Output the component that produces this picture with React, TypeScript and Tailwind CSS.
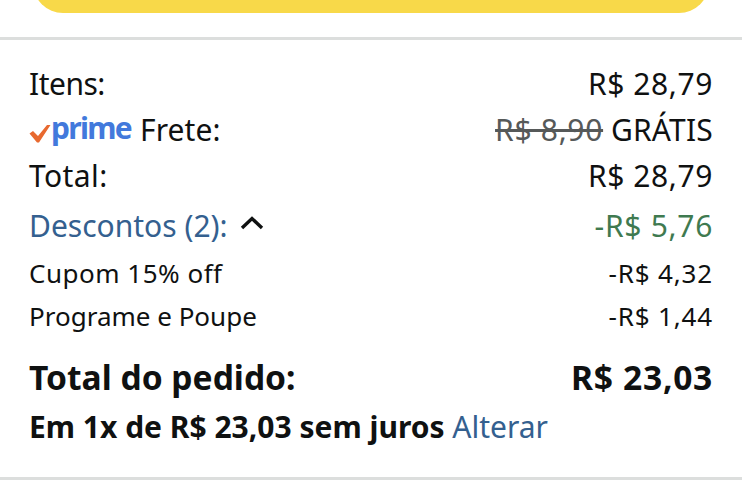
export default function App() {
  return (
    <div className="w-[742px] h-[500px] bg-white overflow-hidden font-['Noto_Sans',sans-serif] text-[#0f1111]">
      <div className="px-[33px] h-[37px] overflow-hidden">
        <div className="h-[60px] mt-[-47px] bg-[#f8d949] rounded-[40px]" />
      </div>
      <div className="h-[3px] bg-[#dcdedd]" />
      <div className="px-[29px] pt-[21px]">
        <div className="flex justify-between items-center h-[46px] text-[30px] leading-[46px]">
          <span className="tracking-[-0.5px]">Itens:</span>
          <span className="tracking-[0.6px]">R$ 28,79</span>
        </div>
        <div className="flex justify-between items-center h-[46px] text-[30px] leading-[46px]">
          <span className="flex items-center">
            <svg width="22" height="19" viewBox="0 0 22 19" className="mt-[7px]">
              <path d="M0.5 9.5 L4 7 L9 12 L18 1 L21.5 1 L10 18.5 L8 18.5 Z" fill="#e8692f" />
            </svg>
            <span className="text-[#4279dc] font-bold text-[30px] mr-[9px] mt-[-5px] tracking-[-1.7px]">prime</span>
            <span className="tracking-[0.1px]">Frete:</span>
          </span>
          <span>
            <span className="text-[#565959] line-through tracking-[0.7px]">R$ 8,90</span>{" "}
            <span className="tracking-[0.2px]">GRÁTIS</span>
          </span>
        </div>
        <div className="flex justify-between items-center h-[46px] text-[30px] leading-[46px]">
          <span className="tracking-[0.4px]">Total:</span>
          <span className="tracking-[0.6px]">R$ 28,79</span>
        </div>
        <div className="flex justify-between items-center h-[46px] mt-[4px] text-[30px] leading-[46px]">
          <span className="flex items-center text-[#34608f]">
            Descontos (2):
            <svg width="26" height="16" viewBox="0 0 26 16" className="ml-[11px] mt-[-6px]">
              <path d="M3 13 L13 3.5 L23 13" fill="none" stroke="#0f1111" strokeWidth="3.4" />
            </svg>
          </span>
          <span className="text-[#3f7a50] tracking-[0.7px]">-R$ 5,76</span>
        </div>
        <div className="flex justify-between items-center h-[43px] mt-[3px] text-[26px] leading-[43px]">
          <span className="tracking-[0.5px]">Cupom 15% off</span>
          <span className="tracking-[0.85px]">-R$ 4,32</span>
        </div>
        <div className="flex justify-between items-center h-[43px] text-[26px] leading-[43px]">
          <span>Programe e Poupe</span>
          <span className="tracking-[0.85px]">-R$ 1,44</span>
        </div>
        <div className="flex justify-between items-center h-[46px] mt-[16px] text-[33.6px] font-bold leading-[46px]">
          <span>Total do pedido:</span>
          <span className="tracking-[0.7px]">R$ 23,03</span>
        </div>
        <div className="h-[44px] mt-[5px] text-[30px] leading-[44px] whitespace-nowrap">
          <span className="font-bold">Em 1x de R$ 23,03 sem juros</span>{" "}
          <span className="text-[#34608f]">Alterar</span>
        </div>
      </div>
      <div className="h-[3px] mt-[28px] bg-[#dcdedd]" />
    </div>
  );
}
